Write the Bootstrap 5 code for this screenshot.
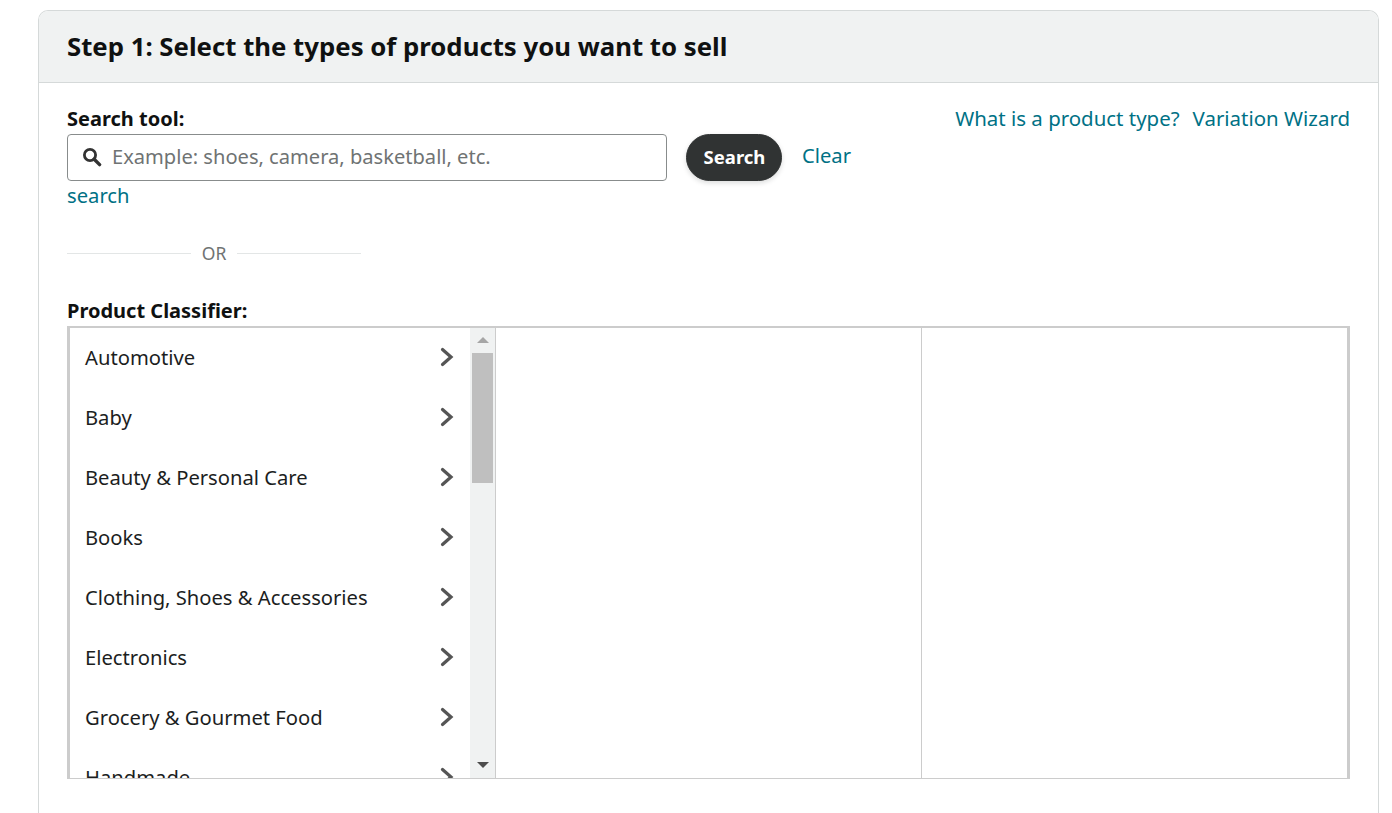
<!DOCTYPE html>
<html lang="en">
<head>
<meta charset="utf-8">
<title>Step 1</title>
<link href="https://cdn.jsdelivr.net/npm/bootstrap@5.3.0/dist/css/bootstrap.min.css" rel="stylesheet">
<style>
html,body{height:813px;overflow:hidden;background:#fff}
body{font-family:"Noto Sans","Open Sans",sans-serif;font-size:20.2px;color:#1c1e1e;line-height:24px}
.page-wrap{padding:10px 13px 0 38px}
.step-card{border:1px solid #d5d9d9;border-bottom:0;border-radius:10px 10px 0 0;height:820px;--bs-card-bg:#fff;overflow:hidden}
.step-head{background:#f0f2f2;border-bottom:1px solid #d5d9d9;height:72px;padding:0 28px 2px;display:flex;align-items:center}
.step-head h1{font-size:25.75px;font-weight:700;margin:0;line-height:32px;font-family:"Noto Sans",sans-serif;color:#0f1111}
.step-body{padding:24px 28px 0}
.side-links{gap:13px;font-size:20.45px;margin-top:-1px}
.teal{color:#007185;text-decoration:none}
.left-zone{width:800px}
.field-label{font-weight:700;font-size:20px;line-height:24px;margin:0;display:block;color:#0f1111}
.search-line{line-height:48px;margin-top:3px;height:48px}
.search-box{display:inline-flex;align-items:center;vertical-align:top;width:600px;height:47px;border:1px solid #888c8c;border-radius:4px;padding:0 14px 2px;gap:10px;background:#fff}
.search-box input{border:0;outline:0;padding:0;flex:1;font:inherit;font-size:20.1px;color:#0f1111;min-width:0;background:transparent}
.search-box input::placeholder{color:#6f7373;opacity:1}
.dark-btn{--bs-btn-bg:#303333;--bs-btn-color:#fff;--bs-btn-border-color:#303333;--bs-btn-hover-bg:#303333;--bs-btn-hover-color:#fff;border-radius:24px;width:96px;height:47px;padding:0 0 2px 1px;font-weight:700;font-size:18.5px;vertical-align:top;margin:0 20px 0 19px;box-shadow:0 2px 5px rgba(15,17,17,.15)}
.clear-inline{position:relative;top:-3px}
.wrap-link{line-height:24px;margin-top:1px;height:24px}
.or-row{width:294px;margin-top:34px;gap:11px;color:#6f7373;font-size:17.5px;line-height:24px}
.or-row hr{flex:1;margin:0;border:0;border-top:1px solid #e3e6e6;opacity:1}
.classifier-label{margin-top:34px;margin-bottom:3px}
.classifier{display:flex;height:453px;border-style:solid;border-color:#cccccc;border-width:2px 3px 1px 3px}
.col-one{width:426px;display:flex;flex:none;border-right:1px solid #ccc;overflow:hidden}
.col-two{width:426px;flex:none;border-right:1px solid #ccc}
.col-three{flex:1}
.cat-list{flex:1;overflow:hidden;min-width:0}
.cat-row{height:60px;display:flex;align-items:center;justify-content:space-between;padding:0 16px 2px 15px}
.fake-scroll{width:25px;flex:none;background:#f0f2f2;position:relative}
.fake-thumb{position:absolute;left:2px;right:2px;top:25px;height:130px;background:#bfbfbf}
.arr{position:absolute;left:12.5px;transform:translateX(-50%);width:0;height:0;border-left:6px solid transparent;border-right:6px solid transparent}
.arr-up{top:9px;border-bottom:6px solid #a6a6a6}
.arr-down{bottom:10px;border-top:6px solid #4d4d4d}
</style>
</head>
<body>
<div class="page-wrap">
  <div class="card step-card">
    <div class="step-head"><h1>Step 1: Select the types of products you want to sell</h1></div>
    <div class="step-body">
      <div class="d-flex justify-content-between">
        <div class="left-zone">
          <label class="field-label" for="q">Search tool:</label>
          <div class="search-line">
            <span class="search-box">
              <svg width="20" height="20" viewBox="0 0 20 20" aria-hidden="true"><circle cx="8" cy="8" r="5.6" fill="none" stroke="#333" stroke-width="2.8"/><path d="M12.2 12.2 17.6 17.6" stroke="#333" stroke-width="3.4" stroke-linecap="round"/></svg>
              <input id="q" type="text" placeholder="Example: shoes, camera, basketball, etc.">
            </span><button type="button" class="btn dark-btn">Search</button><a href="#" class="teal clear-inline">Clear</a>
          </div>
          <div class="wrap-link"><a href="#" class="teal">search</a></div>
        </div>
        <div class="d-flex side-links">
          <a href="#" class="teal">What is a product type?</a>
          <a href="#" class="teal">Variation Wizard</a>
        </div>
      </div>
      <div class="d-flex align-items-center or-row"><hr><span>OR</span><hr></div>
      <div class="field-label classifier-label">Product Classifier:</div>
      <div class="classifier">
        <div class="col-one">
          <div class="cat-list">
            <div class="cat-row"><span>Automotive</span><svg width="14" height="20" viewBox="0 0 14 20"><path d="M2.5 2.5 11 10 2.5 17.5" fill="none" stroke="#555" stroke-width="3.2" stroke-linecap="round"/></svg></div>
            <div class="cat-row"><span>Baby</span><svg width="14" height="20" viewBox="0 0 14 20"><path d="M2.5 2.5 11 10 2.5 17.5" fill="none" stroke="#555" stroke-width="3.2" stroke-linecap="round"/></svg></div>
            <div class="cat-row"><span>Beauty &amp; Personal Care</span><svg width="14" height="20" viewBox="0 0 14 20"><path d="M2.5 2.5 11 10 2.5 17.5" fill="none" stroke="#555" stroke-width="3.2" stroke-linecap="round"/></svg></div>
            <div class="cat-row"><span>Books</span><svg width="14" height="20" viewBox="0 0 14 20"><path d="M2.5 2.5 11 10 2.5 17.5" fill="none" stroke="#555" stroke-width="3.2" stroke-linecap="round"/></svg></div>
            <div class="cat-row"><span>Clothing, Shoes &amp; Accessories</span><svg width="14" height="20" viewBox="0 0 14 20"><path d="M2.5 2.5 11 10 2.5 17.5" fill="none" stroke="#555" stroke-width="3.2" stroke-linecap="round"/></svg></div>
            <div class="cat-row"><span>Electronics</span><svg width="14" height="20" viewBox="0 0 14 20"><path d="M2.5 2.5 11 10 2.5 17.5" fill="none" stroke="#555" stroke-width="3.2" stroke-linecap="round"/></svg></div>
            <div class="cat-row"><span>Grocery &amp; Gourmet Food</span><svg width="14" height="20" viewBox="0 0 14 20"><path d="M2.5 2.5 11 10 2.5 17.5" fill="none" stroke="#555" stroke-width="3.2" stroke-linecap="round"/></svg></div>
            <div class="cat-row"><span>Handmade</span><svg width="14" height="20" viewBox="0 0 14 20"><path d="M2.5 2.5 11 10 2.5 17.5" fill="none" stroke="#555" stroke-width="3.2" stroke-linecap="round"/></svg></div>
          </div>
          <div class="fake-scroll"><div class="arr arr-up"></div><div class="fake-thumb"></div><div class="arr arr-down"></div></div>
        </div>
        <div class="col-two"></div>
        <div class="col-three"></div>
      </div>
    </div>
  </div>
</div>
<script src="https://cdn.jsdelivr.net/npm/bootstrap@5.3.0/dist/js/bootstrap.bundle.min.js"></script>
</body>
</html>
